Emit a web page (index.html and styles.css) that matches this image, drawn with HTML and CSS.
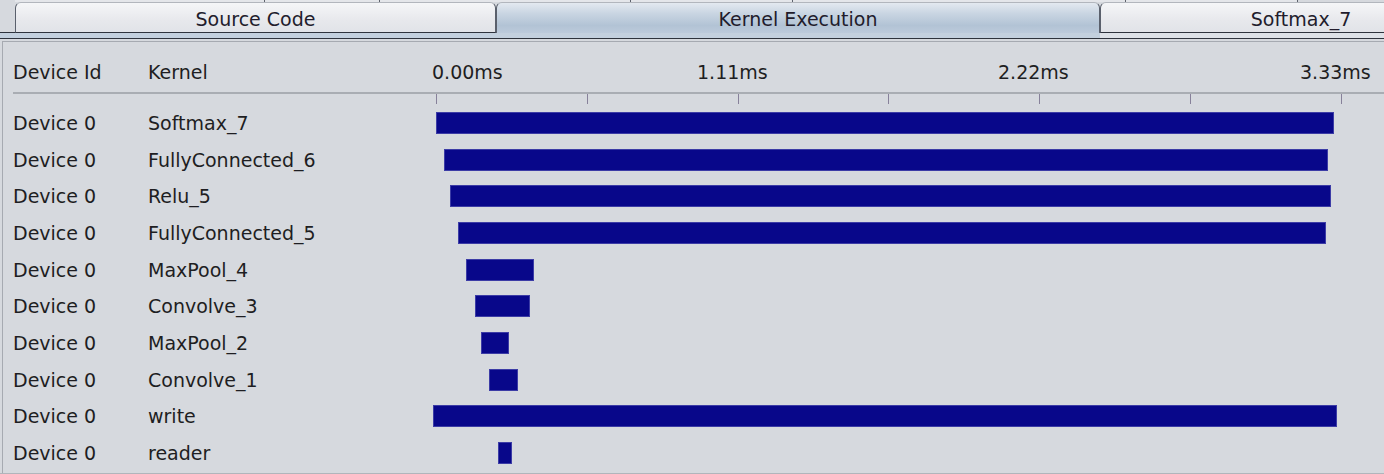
FILE: index.html
```html
<!DOCTYPE html>
<html>
<head>
<meta charset="utf-8">
<link rel="stylesheet" href="styles.css">
</head>
<body>
<div class="top-strip">
  <div class="seg seg-a"></div>
  <div class="seg seg-b"></div>
  <div class="seg seg-c"></div>
  <div class="seg seg-d"></div>
  <div class="seg seg-e"></div>
  <div class="seg seg-f"></div>
  <div class="seg seg-g"></div>
</div>
<div class="tabs">
  <div class="tab tab-source">Source Code</div>
  <div class="tab tab-kernel selected">Kernel Execution</div>
  <div class="tab tab-softmax">Softmax_7</div>
</div>
<div class="band"></div>
<div class="panel">
  <div class="header">
    <div class="c-dev">Device Id</div>
    <div class="c-ker">Kernel</div>
    <div class="scale">
      <span>0.00ms</span><span>1.11ms</span><span>2.22ms</span><span>3.33ms</span>
    </div>
  </div>
  <div class="sep"></div>
  <div class="ticks"><i></i><i></i><i></i><i></i><i></i><i></i><i></i></div>
  <div class="rows">
    <div class="row"><div class="c-dev">Device 0</div><div class="c-ker">Softmax_7</div><div class="track"><div class="bar" style="margin-left:4px;width:898px"></div></div></div>
    <div class="row"><div class="c-dev">Device 0</div><div class="c-ker">FullyConnected_6</div><div class="track"><div class="bar" style="margin-left:12px;width:884px"></div></div></div>
    <div class="row"><div class="c-dev">Device 0</div><div class="c-ker">Relu_5</div><div class="track"><div class="bar" style="margin-left:18px;width:881px"></div></div></div>
    <div class="row"><div class="c-dev">Device 0</div><div class="c-ker">FullyConnected_5</div><div class="track"><div class="bar" style="margin-left:26px;width:868px"></div></div></div>
    <div class="row"><div class="c-dev">Device 0</div><div class="c-ker">MaxPool_4</div><div class="track"><div class="bar" style="margin-left:34px;width:68px"></div></div></div>
    <div class="row"><div class="c-dev">Device 0</div><div class="c-ker">Convolve_3</div><div class="track"><div class="bar" style="margin-left:43px;width:55px"></div></div></div>
    <div class="row"><div class="c-dev">Device 0</div><div class="c-ker">MaxPool_2</div><div class="track"><div class="bar" style="margin-left:49px;width:28px"></div></div></div>
    <div class="row"><div class="c-dev">Device 0</div><div class="c-ker">Convolve_1</div><div class="track"><div class="bar" style="margin-left:57px;width:29px"></div></div></div>
    <div class="row"><div class="c-dev">Device 0</div><div class="c-ker">write</div><div class="track"><div class="bar" style="margin-left:1px;width:904px"></div></div></div>
    <div class="row"><div class="c-dev">Device 0</div><div class="c-ker">reader</div><div class="track"><div class="bar" style="margin-left:66px;width:14px"></div></div></div>
  </div>
  <div class="foot"></div>
</div>
</body>
</html>
```
FILE: styles.css
```css
html, body {
  margin: 0;
  padding: 0;
}
body {
  width: 1384px;
  height: 474px;
  overflow: hidden;
  background: #d6d9de;
  font-family: "DejaVu Sans", sans-serif;
  font-size: 19px;
  color: #1e1e22;
}
.top-strip {
  display: flex;
  height: 2px;
}
.seg {
  flex-shrink: 0;
  height: 2px;
  background: #e4e6ea;
  border-right: 1px solid #5d626c;
  box-sizing: border-box;
}
.seg-a { width: 15px; background: #d6d9de; border-right: none; }
.seg-b { width: 250px; }
.seg-c { width: 115px; }
.seg-d { width: 251px; }
.seg-e { width: 162px; }
.seg-f { width: 333px; }
.seg-g { width: 172px; }
.tabs {
  display: flex;
  align-items: flex-end;
  height: 31px;
  padding-left: 15px;
  background: linear-gradient(to bottom, #d6d9de 0, #d6d9de 30px, #2e333d 30px);
}
.tab {
  flex-shrink: 0;
  box-sizing: border-box;
  height: 31px;
  display: flex;
  align-items: center;
  justify-content: center;
  padding-top: 2px;
  border: 1px solid #5a606c;
  border-top-color: #b2b6bd;
  border-bottom-color: #2e333d;
  border-radius: 6px 6px 0 0;
  background: linear-gradient(to bottom, #f5f6f8, #e7e8ec 60%, #e1e3e8);
  color: #221c2c;
}
.tab-source { width: 481px; }
.tab-kernel { width: 604px; }
.tab-softmax { width: 402px; }
.tab.selected {
  border-bottom: none;
  padding-top: 1px;
  background: linear-gradient(to bottom, #e3e9f0, #c9d5e2 35%, #b2c3d5 75%, #bccadb);
}
.band {
  height: 5px;
  border-bottom: 1px solid #2e333d;
  background: linear-gradient(to right, #c3d0de 0, #c3d0de 1100px, #dde1e7 1100px);
}
.panel {
  margin: 2px 0 0 2px;
  border-top: 1px solid #a6aab1;
  border-left: 1px solid #a6aab1;
  padding-left: 10px;
}
.header {
  display: grid;
  grid-template-columns: 135px 284px 1fr;
  align-items: center;
  height: 40px;
  padding-top: 10px;
}
.scale {
  display: grid;
  grid-template-columns: 265px 301px 302px auto;
}
.sep {
  height: 2px;
  background: #a9adb3;
}
.ticks {
  display: flex;
  justify-content: space-between;
  width: 906px;
  height: 10px;
  margin: 0 0 0 423px;
}
.ticks i {
  display: block;
  width: 1px;
  height: 10px;
  background: #87819a;
}
.rows {
  padding-top: 0.65px;
}
.row {
  display: grid;
  grid-template-columns: 135px 284px 1fr;
  align-items: center;
  height: 36.7px;
}
.track {
  display: flex;
  align-items: center;
}
.bar {
  flex-shrink: 0;
  box-sizing: border-box;
  height: 22px;
  background: #08078a;
  border: 1px solid #3c3ca6;
}
.foot {
  height: 4px;
  margin-left: -13px;
  margin-top: 1px;
  background: #b1b5bb;
}
```
